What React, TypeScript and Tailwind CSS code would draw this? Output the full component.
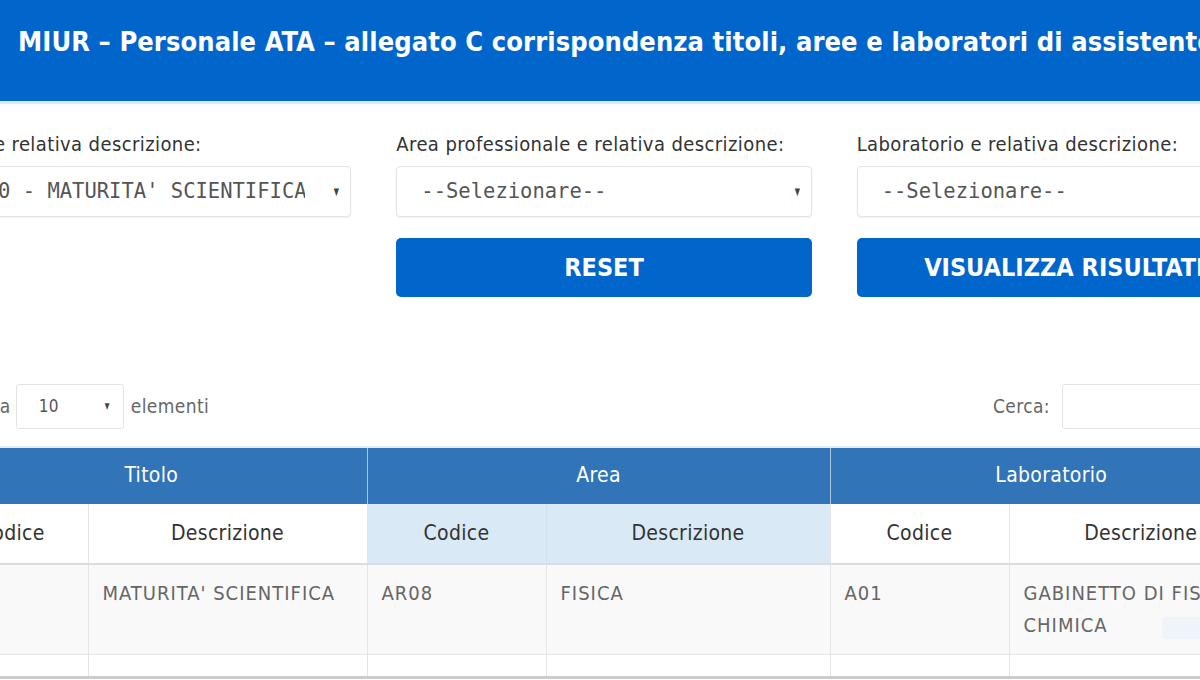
import React from "react";

const sans = { fontFamily: '"Liberation Sans Narrow", "DejaVu Sans Condensed", Roboto, sans-serif' };
const mono = { fontFamily: '"DejaVu Sans Mono", "Liberation Mono", monospace' };

function Select({ value }: { value: string }) {
  return (
    <div className="flex h-[51px] items-center justify-between overflow-hidden rounded-[4px] border border-[#e3e3e3] bg-white pl-6 pr-[10px] shadow-[0_1px_2px_rgba(0,0,0,0.06)]">
      <span className="overflow-hidden whitespace-nowrap text-[20.5px] text-[#555]" style={mono}>
        {value}
      </span>
      <span className="ml-7 shrink-0 scale-x-75 text-[10px] text-[#444]">▼</span>
    </div>
  );
}

export default function App() {
  return (
    <div className="h-[680px] w-[1200px] overflow-hidden bg-white" style={sans}>
      <div className="h-[104px] border-b-[3px] border-[#dcebf9] bg-[#0066cc]">
        <div className="flex h-[101px] items-start pl-[18px] pt-[22px]">
          <h1 className="whitespace-nowrap text-[27px] font-semibold tracking-[0.1px] text-white">
            MIUR – Personale ATA – allegato C corrispondenza titoli, aree e laboratori di assistente tecnico
          </h1>
        </div>
      </div>

      <div className="ml-[-64px] w-[1336px]">
        <div className="grid grid-cols-3 gap-x-[45px] pt-[25px]">
          <div className="flex flex-col">
            <label className="mb-[7px] whitespace-nowrap text-[20px] tracking-[0.4px] text-[#333]">Titolo e relativa descrizione:</label>
            <Select value="0000 - MATURITA' SCIENTIFICA" />
          </div>
          <div className="flex flex-col">
            <label className="mb-[7px] whitespace-nowrap text-[20px] tracking-[0.4px] text-[#333]">Area professionale e relativa descrizione:</label>
            <Select value="--Selezionare--" />
            <button className="mt-[21px] h-[59px] rounded-[5px] bg-[#0066cc] text-[25px] font-bold text-white">RESET</button>
          </div>
          <div className="flex flex-col">
            <label className="mb-[7px] whitespace-nowrap text-[20px] tracking-[0.4px] text-[#333]">Laboratorio e relativa descrizione:</label>
            <Select value="--Selezionare--" />
            <button className="mt-[21px] h-[59px] rounded-[5px] bg-[#0066cc] text-[25px] font-bold text-white">VISUALIZZA RISULTATI</button>
          </div>
        </div>

        <div className="mt-[87px] flex items-center justify-between">
          <div className="flex items-center pl-[14px] text-[19px] tracking-[0.4px] text-[#666]">
            <span>Mostra</span>
            <div className="ml-[5px] flex h-[45px] w-[108px] items-center justify-between rounded-[3px] border border-[#e3e3e3] pl-[22px] pr-3">
              <span className="text-[17px] text-[#555]">10</span>
              <span className="scale-x-75 text-[9px] text-[#444]">▼</span>
            </div>
            <span className="ml-[7px]">elementi</span>
          </div>
          <div className="flex items-center text-[19px] tracking-[0.4px] text-[#666]">
            <span>Cerca:</span>
            <div className="ml-[12px] h-[45px] w-[210px] rounded-[3px] border border-[#e3e3e3]" />
          </div>
        </div>

        <table className="mt-[17px] border-collapse border-t-2 border-[#e0eef9] text-[21px] tracking-[0.3px]" style={{ tableLayout: "fixed", width: 1336 }}>
          <colgroup>
            <col style={{ width: 152 }} />
            <col style={{ width: 279 }} />
            <col style={{ width: 179 }} />
            <col style={{ width: 284 }} />
            <col style={{ width: 179 }} />
            <col style={{ width: 263 }} />
          </colgroup>
          <thead>
            <tr className="h-[57px] bg-[#3174b8] text-white">
              <th colSpan={2} className="border-r border-[#a9c6e4] font-normal">Titolo</th>
              <th colSpan={2} className="border-r border-[#a9c6e4] font-normal">Area</th>
              <th colSpan={2} className="font-normal">Laboratorio</th>
            </tr>
            <tr className="h-[60px] border-b-2 border-[#dddddd] text-[#333]">
              <th className="border-r border-[#e5e5e5] font-normal">Codice</th>
              <th className="border-r border-[#e5e5e5] font-normal">Descrizione</th>
              <th className="border-r border-[#cfe0ee] bg-[#d9eaf6] font-normal">Codice</th>
              <th className="border-r border-[#e5e5e5] bg-[#d9eaf6] font-normal">Descrizione</th>
              <th className="border-r border-[#e5e5e5] font-normal">Codice</th>
              <th className="font-normal">Descrizione</th>
            </tr>
          </thead>
          <tbody className="text-[20px] leading-[32px] tracking-[1px] text-[#666]">
            <tr className="h-[90px] border-b border-[#e5e5e5] bg-[#f9f9f9] align-top">
              <td className="border-r border-[#e5e5e5] px-[14px] pt-[12px]">T00</td>
              <td className="border-r border-[#e5e5e5] px-[14px] pt-[12px]">MATURITA' SCIENTIFICA</td>
              <td className="border-r border-[#e5e5e5] px-[14px] pt-[12px]">AR08</td>
              <td className="border-r border-[#e5e5e5] px-[14px] pt-[12px]">FISICA</td>
              <td className="border-r border-[#e5e5e5] px-[14px] pt-[12px]">A01</td>
              <td className="relative whitespace-nowrap px-[14px] pt-[12px]">
                GABINETTO DI FISICA E<br />CHIMICA
                <span className="absolute left-[152px] top-[52px] h-[22px] w-[60px] rounded-sm bg-[#eef4fa]" />
              </td>
            </tr>
            <tr className="h-[23px] border-b-[3px] border-[#cccccc]">
              <td className="border-r border-[#e5e5e5]" />
              <td className="border-r border-[#e5e5e5]" />
              <td className="border-r border-[#e5e5e5]" />
              <td className="border-r border-[#e5e5e5]" />
              <td className="border-r border-[#e5e5e5]" />
              <td />
            </tr>
          </tbody>
        </table>
      </div>
    </div>
  );
}
